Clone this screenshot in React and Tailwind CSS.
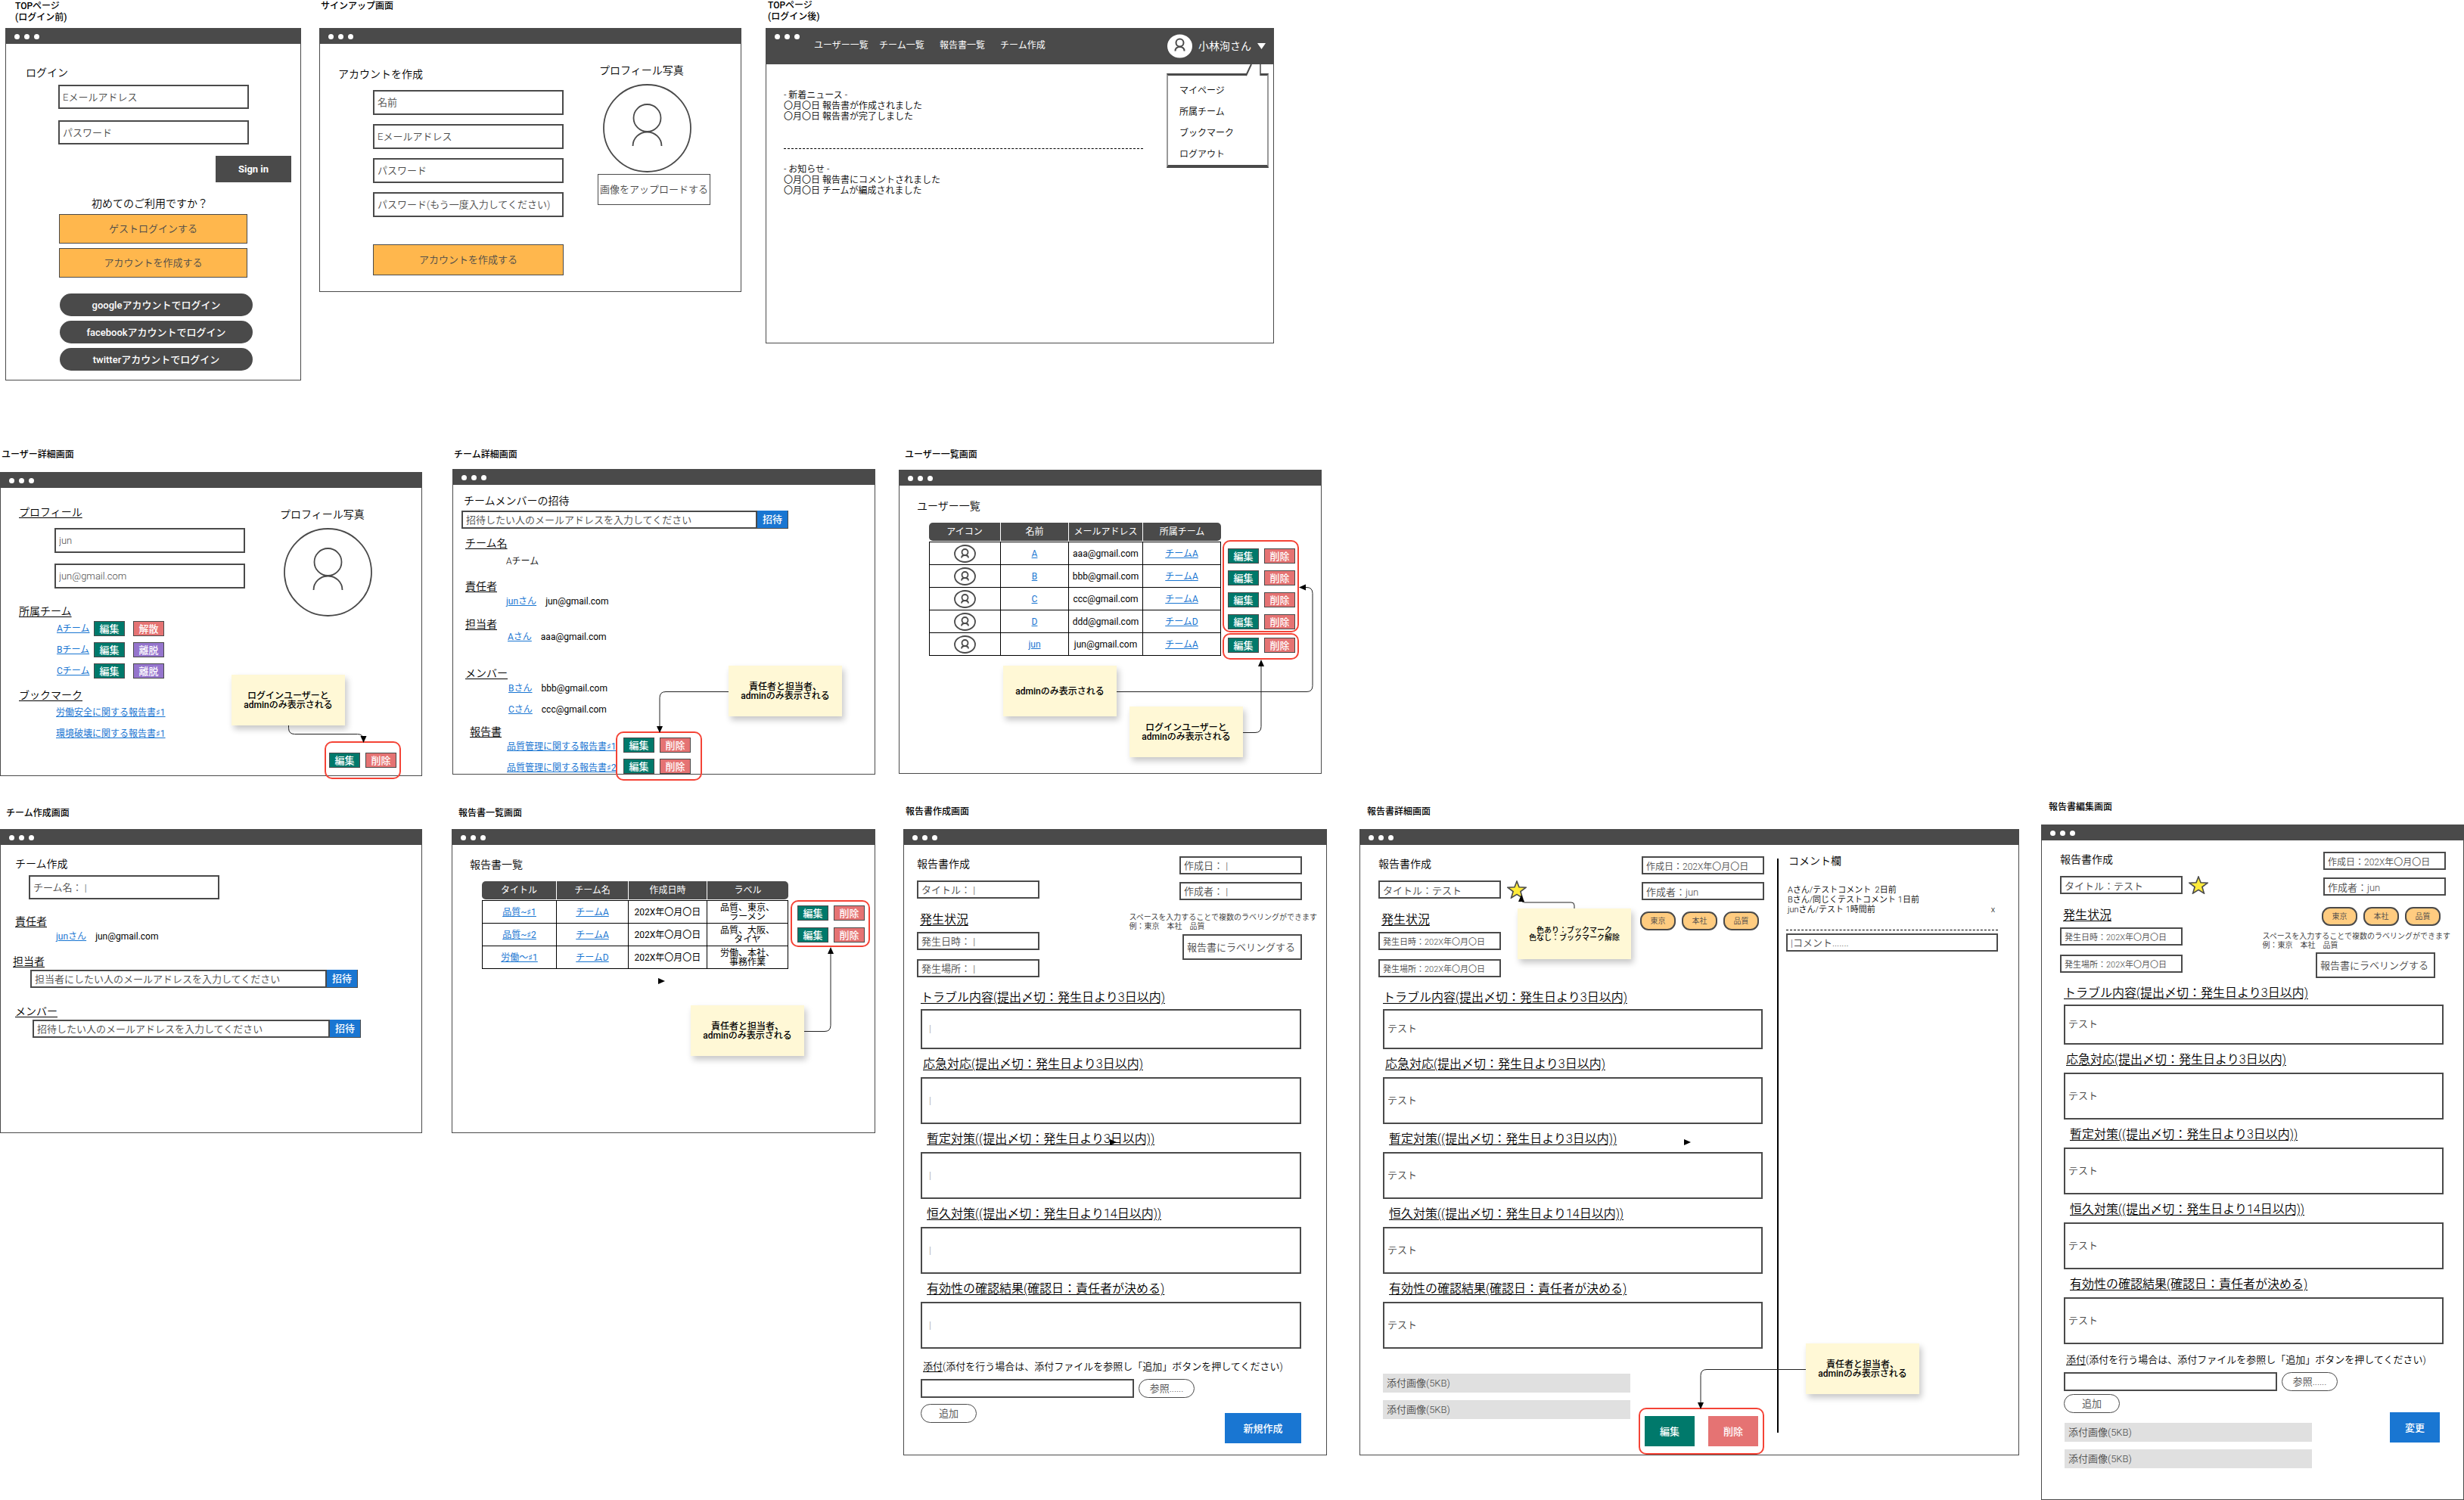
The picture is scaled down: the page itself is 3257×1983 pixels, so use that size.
import React from "react";

/* ---------- shared pieces ---------- */

function Screen({ caption, captionClass = "", className = "", boxClass = "", tall = false, nav, children }) {
  return (
    <section className={className}>
      <h2 className={`text-[12px] font-medium text-black ${captionClass}`}>{caption}</h2>
      <div className={`relative flex flex-col border border-[#4a4a4a] bg-white ${boxClass}`}>
        <header className={`flex bg-[#4a4a4a] ${tall ? "h-[47px] pt-[7px]" : "h-5 items-center"}`}>
          <div className="flex gap-[6px] pl-[11px]">
            <span className="size-[7px] rounded-full bg-white" />
            <span className="size-[7px] rounded-full bg-white" />
            <span className="size-[7px] rounded-full bg-white" />
          </div>
          {nav}
        </header>
        {children}
      </div>
    </section>
  );
}

function Field({ label, className = "", size = "text-[13px]", ...rest }) {
  return (
    <input
      aria-label={label}
      className={`block min-w-0 rounded-none border-2 border-[#4a4a4a] bg-white px-1 text-[#4a4a4a] placeholder:text-[#4a4a4a] ${size} ${className}`}
      {...rest}
    />
  );
}

function Tile({ tone, children }) {
  const tones = {
    green: "bg-[#00796b]",
    red: "bg-[#e57373]",
    purple: "bg-[#9575cd]",
  };
  return (
    <button
      className={`flex h-5 w-[41px] items-center justify-center border border-[#4a4a4a] text-[13px] leading-none font-medium text-white ${tones[tone]}`}
    >
      {children}
    </button>
  );
}

function EditDelete() {
  return (
    <div className="flex gap-[7px]">
      <Tile tone="green">編集</Tile>
      <Tile tone="red">削除</Tile>
    </div>
  );
}

function Frame({ className = "", children }) {
  return <div className={`relative flex flex-col rounded-[10px] border-2 border-[#f44336] ${className}`}>{children}</div>;
}

function Note({ className = "", size = "text-[12px] leading-[12px]", children }) {
  return (
    <aside
      className={`absolute flex h-[67px] w-[150px] flex-col items-center justify-center bg-[#fff8d6] text-center font-medium whitespace-nowrap text-black shadow-[3px_5px_8px_rgba(0,0,0,0.22)] ${size} ${className}`}
    >
      {children}
    </aside>
  );
}

function Connectors({ lines = [], heads = [] }) {
  return (
    <svg className="pointer-events-none absolute top-0 left-0 size-px overflow-visible" aria-hidden="true">
      {lines.map((d) => (
        <path key={d} d={d} fill="none" stroke="#222" strokeWidth="1" />
      ))}
      {heads.map((d) => (
        <path key={d} d={d} fill="#000" />
      ))}
    </svg>
  );
}

function A({ children, className = "" }) {
  return (
    <a href="#" className={`font-normal whitespace-nowrap text-[#1976d2] underline ${className}`}>
      {children}
    </a>
  );
}

function Portrait({ className = "" }) {
  return (
    <svg viewBox="0 0 117 117" className={`size-[117px] ${className}`} fill="none" stroke="#4a4a4a" strokeWidth="1.8">
      <circle cx="58.5" cy="58.5" r="57.5" />
      <circle cx="58.5" cy="45" r="18" />
      <path d="M39.5 82a19 18.500 0 0 1 38 0" />
    </svg>
  );
}

function MiniAvatar() {
  return (
    <svg viewBox="0 0 29 24" className="mx-auto block h-6 w-[29px]" fill="none" stroke="#4a4a4a" strokeWidth="1.8">
      <ellipse cx="14.500" cy="12" rx="13.500" ry="11" />
      <circle cx="14.500" cy="10" r="4" />
      <path d="M10 17.500q0-3.500 4.500-3.500t4.500 3.500" />
    </svg>
  );
}

function Star() {
  return (
    <svg viewBox="0 0 26 24" className="h-6 w-[26px] shrink-0" fill="#ffeb3b" stroke="#4a4a4a" strokeWidth="1.6">
      <path d="M13 1l3 7.800 8.800.5-6.900 5.300 2.500 8.400L13 18.400 5.600 23l2.500-8.400L1.200 9.300l8.800-.5z" />
    </svg>
  );
}

function SectionTitle({ className = "", children }) {
  return <h3 className={`text-[14px] leading-[18px] text-black underline underline-offset-2 ${className}`}>{children}</h3>;
}

function Invite({ text, label, className = "" }) {
  return (
    <div className={`flex ${className}`}>
      <Field label={label} placeholder={text} className="h-6 flex-1" />
      <button className="h-6 w-[41px] border-r border-b border-[#4a4a4a] bg-[#1976d2] text-[13px] leading-none font-medium text-white">
        招待
      </button>
    </div>
  );
}

function Person({ name, mail, className = "" }) {
  return (
    <div className={`flex gap-3 text-[12px] leading-4 font-normal text-black ${className}`}>
      <A>{name}</A>
      <span>{mail}</span>
    </div>
  );
}

function Table({ label, cols, heads, rows }) {
  return (
    <table aria-label={label} className="w-full flex-1 table-fixed border-separate border-spacing-0 text-center text-[12px] font-normal text-black">
      <colgroup>
        {cols.map((c, i) => (
          <col key={i} className={c} />
        ))}
      </colgroup>
      <thead>
        <tr>
          {heads.map((h) => (
            <th
              key={h}
              className="h-[25px] border-b border-white bg-[#4a4a4a] bg-clip-padding p-0 leading-none font-normal whitespace-nowrap text-white not-last:border-r first:rounded-l-[5px] last:rounded-r-[5px]"
            >
              {h}
            </th>
          ))}
        </tr>
      </thead>
      <tbody className="[&>tr:first-child>td]:h-[31px] [&>tr:first-child>td]:border-t">
        {rows.map((r, i) => (
          <tr key={i}>
            {r.map((c, j) => (
              <td key={j} className="h-[30px] border-r border-b border-black p-0 leading-[12px] whitespace-nowrap first:border-l">
                {c}
              </td>
            ))}
          </tr>
        ))}
      </tbody>
    </table>
  );
}

/* ---------- report form parts ---------- */

const SECTIONS = [
  ["トラブル内容(提出〆切：発生日より3日以内)", "", "h-[53px]"],
  ["応急対応(提出〆切：発生日より3日以内)", "pl-[3px]", "h-[62px]"],
  ["暫定対策((提出〆切：発生日より3日以内))", "pl-2", "h-[62px]"],
  ["恒久対策((提出〆切：発生日より14日以内))", "pl-2", "h-[62px]"],
  ["有効性の確認結果(確認日：責任者が決める)", "pl-2", "h-[62px]"],
];

function Sections({ value, className = "" }) {
  return (
    <div className={`flex flex-col gap-2 ${className}`}>
      {SECTIONS.map(([title, indent, height], i) => (
        <label key={title} className={`flex flex-col ${i ? "gap-[5px]" : "gap-[3px]"}`}>
          <span className={`text-[16px] leading-6 whitespace-nowrap text-black underline underline-offset-2 ${indent}`}>{title}</span>
          {value ? (
            <textarea
              defaultValue={value}
              className={`block w-full resize-none border-2 border-[#4a4a4a] px-1 text-[13px] leading-5 text-[#4a4a4a] ${height} ${i ? "pt-[19px]" : "pt-[14px]"}`}
            />
          ) : (
            <textarea
              placeholder="|"
              className={`block w-full resize-none border-2 border-[#4a4a4a] px-[9px] text-[13px] leading-5 placeholder:text-[#999] ${height} ${i ? "pt-[19px]" : "pt-[14px]"}`}
            />
          )}
        </label>
      ))}
    </div>
  );
}

function Basics({ filled, className = "" }) {
  return (
    <div className={`flex flex-col pt-[15px] ${className}`}>
      <h3 className="text-[14px] leading-5 text-black">報告書作成</h3>
      <div className="mt-3 flex h-6 items-center gap-2">
        {filled ? (
          <Field label="タイトル" defaultValue="タイトル：テスト" className="h-6 w-[162px]" />
        ) : (
          <Field label="タイトル" placeholder="タイトル： |" className="h-6 w-[162px]" />
        )}
        {filled && <Star />}
      </div>
      <h3 className="mt-4 pl-1 text-[16px] leading-6 text-black underline underline-offset-2">発生状況</h3>
      {filled ? (
        <>
          <Field label="発生日時" size="text-[11px]" defaultValue="発生日時：202X年〇月〇日" className="mt-1 h-6 w-[162px]" />
          <Field label="発生場所" size="text-[11px]" defaultValue="発生場所：202X年〇月〇日" className="mt-3 h-6 w-[162px]" />
        </>
      ) : (
        <>
          <Field label="発生日時" placeholder="発生日時： |" className="mt-1 h-6 w-[162px]" />
          <Field label="発生場所" placeholder="発生場所： |" className="mt-3 h-6 w-[162px]" />
        </>
      )}
    </div>
  );
}

function Authoring({ filled, className = "" }) {
  return (
    <div className={`flex flex-col gap-2.5 pt-[15px] ${className}`}>
      {filled ? (
        <>
          <Field label="作成日" size="text-[12px]" defaultValue="作成日：202X年〇月〇日" className="h-6 w-[162px]" />
          <Field label="作成者" defaultValue="作成者：jun" className="h-6 w-[162px]" />
        </>
      ) : (
        <>
          <Field label="作成日" placeholder="作成日： |" className="h-6 w-[162px]" />
          <Field label="作成者" placeholder="作成者： |" className="h-6 w-[162px]" />
        </>
      )}
    </div>
  );
}

function Tags({ className = "" }) {
  return (
    <div className={`flex gap-2 ${className}`}>
      {["東京", "本社", "品質"].map((t) => (
        <span
          key={t}
          className="flex h-[25px] w-[47px] items-center justify-center rounded-[11px] border-2 border-[#4a4a4a] bg-[#ffcc80] text-[10px] leading-none text-[#4a4a4a]"
        >
          {t}
        </span>
      ))}
    </div>
  );
}

function LabelHint({ className = "" }) {
  return (
    <p className={`text-[10px] leading-[12px] whitespace-nowrap text-[#333] ${className}`}>
      スペースを入力することで複数のラベリングができます
      <br />
      例：東京　本社　品質
    </p>
  );
}

function Upload({ className = "", gap = "" }) {
  return (
    <div className={className}>
      <p className="pl-[3px] text-[13px] leading-5 whitespace-nowrap text-black">
        <span className="underline underline-offset-2">添付</span>
        (添付を行う場合は、添付ファイルを参照し「追加」ボタンを押してください)
      </p>
      <div className="mt-[6px] flex gap-[6px]">
        <Field label="添付ファイル" className="h-[25px] w-[282px]" />
        <button className="h-[25px] w-[74px] rounded-full border border-[#4a4a4a] text-[13px] leading-none text-[#4a4a4a]">参照......</button>
      </div>
      <button className={`h-[25px] w-[74px] rounded-full border border-[#4a4a4a] text-[13px] leading-none text-[#4a4a4a] ${gap}`}>追加</button>
    </div>
  );
}

function Attachments({ className = "" }) {
  return (
    <ul className={`flex w-[327px] flex-col gap-2.5 ${className}`}>
      <li className="h-[25px] bg-[#e0e0e0] pl-[5px] text-[13px] leading-[25px] text-[#4a4a4a]">添付画像(5KB)</li>
      <li className="h-[25px] bg-[#e0e0e0] pl-[5px] text-[13px] leading-[25px] text-[#4a4a4a]">添付画像(5KB)</li>
    </ul>
  );
}

/* ---------- screens ---------- */

function Login() {
  const pill = "h-[30px] rounded-[15px] bg-[#4a4a4a] text-[13px] leading-none font-medium text-white";
  return (
    <Screen
      caption={<>TOPページ<br />(ログイン前)</>}
      captionClass="h-[37px] pt-px pl-[13px] leading-[15px]"
      boxClass="min-h-[466px] pb-3"
    >
      <h3 className="pt-7 pl-[26px] text-[14px] leading-5 text-black">ログイン</h3>
      <div className="mr-[68px] ml-[69px] mt-[6px] flex flex-col gap-[15px]">
        <Field label="Eメールアドレス" placeholder="Eメールアドレス" className="h-8" />
        <Field label="パスワード" placeholder="パスワード" className="h-8" />
      </div>
      <button className="mt-[15px] mr-3 h-[35px] w-[100px] self-end bg-[#4a4a4a] text-[13px] leading-none font-bold text-white">
        Sign in
      </button>
      <p className="mt-[18px] mb-px pr-[9px] text-center text-[14px] leading-5 text-black">初めてのご利用ですか？</p>
      <div className="mx-[70px] mt-[3px] flex flex-col gap-[6px] text-[13px] text-[#4a4a4a]">
        <button className="h-[39px] border border-[#4a4a4a] bg-[#ffb74d] leading-none">ゲストログインする</button>
        <button className="h-[39px] border border-[#4a4a4a] bg-[#ffb74d] leading-none">アカウントを作成する</button>
      </div>
      <div className="mt-[21px] mr-[63px] ml-[71px] flex flex-col gap-[6px]">
        <button className={pill}>googleアカウントでログイン</button>
        <button className={pill}>facebookアカウントでログイン</button>
        <button className={pill}>twitterアカウントでログイン</button>
      </div>
    </Screen>
  );
}

function SignUp() {
  return (
    <Screen
      caption="サインアップ画面"
      captionClass="h-[37px] pt-px pl-0.5 leading-[15px]"
      className="ml-6"
      boxClass="min-h-[349px] pb-5"
    >
      <div className="flex gap-[45px] pr-10">
        <div className="flex-1 pt-[30px]">
          <h3 className="pl-6 text-[14px] leading-5 text-black">アカウントを作成</h3>
          <div className="mt-[11px] ml-[70px] flex flex-col gap-3">
            <Field label="名前" placeholder="名前" className="h-[33px]" />
            <Field label="Eメールアドレス" placeholder="Eメールアドレス" className="h-[33px]" />
            <Field label="パスワード" placeholder="パスワード" className="h-[33px]" />
            <Field label="パスワード(確認)" placeholder="パスワード(もう一度入力してください)" className="h-[33px]" />
            <button className="mt-6 h-[41px] border border-[#4a4a4a] bg-[#ffb74d] text-[13px] leading-none text-[#4a4a4a]">
              アカウントを作成する
            </button>
          </div>
        </div>
        <div className="flex w-[149px] flex-col pt-[25px]">
          <p className="pl-0.5 text-[14px] leading-5 text-black">プロフィール写真</p>
          <Portrait className="mt-2 ml-[7px]" />
          <button className="mt-0.5 h-[41px] border border-[#4a4a4a] bg-white text-[13px] leading-none whitespace-nowrap text-[#4a4a4a]">
            画像をアップロードする
          </button>
        </div>
      </div>
    </Screen>
  );
}

function Home() {
  return (
    <Screen
      caption={<>TOPページ<br />(ログイン後)</>}
      captionClass="h-[37px] pl-[3px] leading-[15px]"
      className="ml-8"
      boxClass="min-h-[417px]"
      tall
      nav={
        <div className="flex flex-1 items-start justify-between pr-[10px] pl-[19px] text-[12px] font-normal text-white">
          <nav className="flex pt-[7px] leading-4">
            <a href="#" className="w-[86px]">ユーザー一覧</a>
            <a href="#" className="w-20">チーム一覧</a>
            <a href="#" className="w-20">報告書一覧</a>
            <a href="#">チーム作成</a>
          </nav>
          <button className="flex items-center text-[14px] leading-none">
            <svg viewBox="0 0 33 32" className="h-8 w-[33px]">
              <ellipse cx="16.500" cy="16" rx="16.500" ry="15.500" fill="#fff" />
              <g fill="none" stroke="#4a4a4a" strokeWidth="2">
                <circle cx="16.500" cy="11.500" r="5" />
                <path d="M10.500 22.500q0-5.500 6-5.500t6 5.500" />
              </g>
            </svg>
            <span className="ml-2">小林洵さん</span>
            <svg viewBox="0 0 11 8" className="ml-2 h-2 w-[11px]" fill="#fff">
              <path d="M0 0h11L5.500 8z" />
            </svg>
          </button>
        </div>
      }
    >
      <div className="w-[498px] pt-[34px] pl-[23px] text-[12px] leading-[14px] text-black">
        <p>- 新着ニュース -</p>
        <p>〇月〇日 報告書が作成されました</p>
        <p>〇月〇日 報告書が完了しました</p>
        <hr className="mt-[35px] border-t border-dashed border-black" />
        <p className="mt-5">- お知らせ -</p>
        <p>〇月〇日 報告書にコメントされました</p>
        <p>〇月〇日 チームが編成されました</p>
      </div>
      <nav className="absolute top-[59px] right-[6px] flex w-[135px] flex-col border-x-2 border-t-[3px] border-b-4 border-x-[#9a9a9a] border-t-[#4a4a4a] border-b-[#4a4a4a] bg-white pt-[6px] pl-[15px] text-[12px] leading-7 text-black">
        <svg className="absolute -top-[15px] -left-0.5 h-[15px] w-[135px] overflow-visible" fill="none" stroke="#4a4a4a">
          <path d="M105 16L112 0H124V16z" fill="#fff" stroke="none" />
          <path d="M105 15L112 0" strokeWidth="2" />
          <path d="M124 0V15" strokeWidth="1.500" />
        </svg>
        <a href="#">マイページ</a>
        <a href="#">所属チーム</a>
        <a href="#">ブックマーク</a>
        <a href="#">ログアウト</a>
      </nav>
    </Screen>
  );
}

function UserDetail() {
  const teams = [
    ["Aチーム", "red", "解散"],
    ["Bチーム", "purple", "離脱"],
    ["Cチーム", "purple", "離脱"],
  ];
  return (
    <Screen caption="ユーザー詳細画面" captionClass="mb-3.5 pl-0.5 leading-[18px]" boxClass="min-h-[402px]">
      <div className="flex">
        <div className="flex-1 pt-[23px]">
          <SectionTitle className="pl-6">プロフィール</SectionTitle>
          <div className="mt-3 mr-[46px] ml-[71px] flex flex-col gap-3.5">
            <Field label="名前" defaultValue="jun" className="h-[33px]" />
            <Field label="メールアドレス" defaultValue="jun@gmail.com" className="h-[33px]" />
          </div>
          <SectionTitle className="mt-[21px] pl-6">所属チーム</SectionTitle>
          <div className="mt-1 ml-[74px] flex flex-col gap-2">
            {teams.map(([name, tone, action]) => (
              <div key={name} className="flex items-center">
                <A className="w-[49px] text-[12px] leading-5">{name}</A>
                <Tile tone="green">編集</Tile>
                <span className="w-[11px]" />
                <Tile tone={tone}>{action}</Tile>
              </div>
            ))}
          </div>
          <SectionTitle className="mt-[13px] pl-6">ブックマーク</SectionTitle>
          <div className="ml-[73px] flex flex-col items-start text-[12px] leading-7">
            <A>労働安全に関する報告書♯1</A>
            <A>環境破壊に関する報告書♯1</A>
          </div>
        </div>
        <div className="flex w-[187px] flex-col pt-[25px]">
          <p className="text-[14px] leading-5 text-black">プロフィール写真</p>
          <Portrait className="mt-2 ml-[5px]" />
          <Frame className="mt-[165px] -mb-[6px] ml-[59px] w-[101px] pt-[13px] pb-[13px] pl-1">
            <EditDelete />
          </Frame>
        </div>
      </div>
      <Note className="top-[267px] left-[305px]">
        <span>ログインユーザーと</span>
        <span>adminのみ表示される</span>
      </Note>
      <Connectors lines={["M380.5 334v3.500q0 8 8 8h83q8 0 8 8"]} heads={["M475.500 348h8l-4 9z"]} />
    </Screen>
  );
}

function TeamDetail() {
  return (
    <Screen caption="チーム詳細画面" captionClass="mb-2.5 pl-0.5 leading-[18px]" className="ml-10" boxClass="min-h-[403px]">
      <h3 className="pt-[11px] pl-3.5 text-[14px] leading-5 text-black">チームメンバーの招待</h3>
      <Invite label="メールアドレス" text="招待したい人のメールアドレスを入力してください" className="mt-[3px] mr-[114px] ml-[11px]" />
      <SectionTitle className="mt-2.5 pl-4">チーム名</SectionTitle>
      <p className="mt-[7px] pl-[70px] text-[12px] leading-4 text-black">Aチーム</p>
      <SectionTitle className="mt-4 pl-4">責任者</SectionTitle>
      <Person name="junさん" mail="jun@gmail.com" className="mt-[3px] ml-[70px]" />
      <SectionTitle className="mt-[13px] pl-4">担当者</SectionTitle>
      <Person name="Aさん" mail="aaa@gmail.com" className="ml-[72px]" />
      <SectionTitle className="mt-[31px] pl-4">メンバー</SectionTitle>
      <div className="mt-[3px] ml-[73px] flex flex-col gap-3">
        <Person name="Bさん" mail="bbb@gmail.com" />
        <Person name="Cさん" mail="ccc@gmail.com" />
      </div>
      <div className="mt-3 -mb-[9px] flex items-start">
        <div className="w-[215px]">
          <SectionTitle className="pl-[22px]">報告書</SectionTitle>
          <div className="mt-[3px] ml-[71px] flex flex-col gap-3 text-[12px] leading-4">
            <A>品質管理に関する報告書♯1</A>
            <A>品質管理に関する報告書♯2</A>
          </div>
        </div>
        <Frame className="mt-[9px] w-[114px] gap-2 pt-[6px] pb-[7px] pl-2">
          <EditDelete />
          <EditDelete />
        </Frame>
      </div>
      <Note className="top-[259px] left-[364px]">
        <span>責任者と担当者、</span>
        <span>adminのみ表示される</span>
      </Note>
      <Connectors lines={["M364 293.500H281q-8 0-8 8V340"]} heads={["M269 339h8l-4 9z"]} />
    </Screen>
  );
}

function UserList() {
  const users = [
    ["A", "aaa@gmail.com", "チームA"],
    ["B", "bbb@gmail.com", "チームA"],
    ["C", "ccc@gmail.com", "チームA"],
    ["D", "ddd@gmail.com", "チームD"],
    ["jun", "jun@gmail.com", "チームA"],
  ];
  return (
    <Screen caption="ユーザー一覧画面" captionClass="mb-[11px] pl-2 leading-[18px]" className="ml-[31px]" boxClass="min-h-[402px]">
      <h3 className="pt-[17px] pl-[23px] text-[14px] leading-5 text-black">ユーザー一覧</h3>
      <div className="mt-3 mr-[29px] ml-[39px] flex items-start gap-0.5">
        <Table
          label="ユーザー一覧"
          cols={["w-[95px]", "w-[90px]", "w-[98px]", "w-[103px]"]}
          heads={["アイコン", "名前", "メールアドレス", "所属チーム"]}
          rows={users.map(([n, m, t]) => [<MiniAvatar />, <A>{n}</A>, m, <A>{t}</A>])}
        />
        <div className="mt-[23px] flex w-[101px] shrink-0 flex-col gap-px">
          <Frame className="gap-[9px] pt-[9px] pb-0.5 pl-[5px]">
            <EditDelete />
            <EditDelete />
            <EditDelete />
            <EditDelete />
          </Frame>
          <Frame className="pt-1 pb-[7px] pl-[5px]">
            <EditDelete />
          </Frame>
        </div>
      </div>
      <Note className="top-[258px] left-[137px]">adminのみ表示される</Note>
      <Note className="top-[312px] left-[304px]">
        <span>ログインユーザーと</span>
        <span>adminのみ表示される</span>
      </Note>
      <Connectors
        lines={["M287 292.500H538q8 0 8-8V162.500q0-8-8-8H536", "M454 346.500h16q8 0 8-8V258"]}
        heads={["M528 154.500l9-4v8z", "M474 259h8l-4-9z"]}
      />
    </Screen>
  );
}

function TeamCreate() {
  return (
    <Screen caption="チーム作成画面" captionClass="mt-2 mb-3 pl-2 leading-[18px]" boxClass="min-h-[402px]">
      <h3 className="pt-[15px] pl-[19px] text-[14px] leading-5 text-black">チーム作成</h3>
      <Field label="チーム名" placeholder="チーム名： |" className="mt-[5px] mr-[267px] ml-[37px] h-8" />
      <SectionTitle className="mt-5 pl-[19px]">責任者</SectionTitle>
      <Person name="junさん" mail="jun@gmail.com" className="mt-[3px] ml-[73px]" />
      <SectionTitle className="mt-4 pl-4">担当者</SectionTitle>
      <Invite label="担当者のメールアドレス" text="担当者にしたい人のメールアドレスを入力してください" className="mt-0.5 mr-[84px] ml-[39px]" />
      <SectionTitle className="mt-[22px] pl-[19px]">メンバー</SectionTitle>
      <Invite label="メンバーのメールアドレス" text="招待したい人のメールアドレスを入力してください" className="mt-0.5 mr-20 ml-[42px]" />
    </Screen>
  );
}

function ReportList() {
  const date = "202X年〇月〇日";
  const rows = [
    [<A>品質~♯1</A>, <A>チームA</A>, date, <>品質、東京、<br />ラーメン</>],
    [<A>品質~♯2</A>, <A>チームA</A>, date, <>品質、大阪、<br />タイヤ</>],
    [<A>労働～♯1</A>, <A>チームD</A>, date, <>労働、本社、<br />事務作業</>],
  ];
  return (
    <Screen caption="報告書一覧画面" captionClass="mt-2 mb-3 pl-[9px] leading-[18px]" className="ml-[39px]" boxClass="min-h-[402px]">
      <h3 className="pt-4 pl-[23px] text-[14px] leading-5 text-black">報告書一覧</h3>
      <div className="mt-3 mr-[6px] ml-[39px] flex items-start gap-[3px]">
        <Table
          label="報告書一覧"
          cols={["w-[99px]", "w-[95px]", "w-[104px]", "w-[107px]"]}
          heads={["タイトル", "チーム名", "作成日時", "ラベル"]}
          rows={rows}
        />
        <Frame className="mt-[25px] w-[105px] shrink-0 gap-[9px] pt-[5px] pb-1 pl-[7px]">
          <EditDelete />
          <EditDelete />
        </Frame>
      </div>
      <Note className="top-[232px] left-[315px]">
        <span>責任者と担当者、</span>
        <span>adminのみ表示される</span>
      </Note>
      <Connectors lines={["M465 266.500h27q8 0 8-8V163"]} heads={["M496 164h8l-4-9z", "M272 196v8l9-4z"]} />
    </Screen>
  );
}

function ReportCreate() {
  return (
    <Screen caption="報告書作成画面" captionClass="mt-1.5 mb-3.5 pl-[3px] leading-[18px]" className="ml-[37px]" boxClass="min-h-[828px]">
      <div className="flex min-h-[190px] justify-between">
        <Basics className="pl-[17px]" />
        <div className="flex flex-col items-end">
          <Authoring className="mr-8" />
          <LabelHint className="mt-[17px] mr-3" />
          <Field label="ラベル" placeholder="報告書にラベリングする" className="mt-1 mr-8 h-[34px] w-[158px]" />
        </div>
      </div>
      <Sections className="mr-[33px] ml-[22px]" />
      <div className="mt-[14px] mr-[33px] ml-[22px] flex flex-col">
        <Upload gap="mt-2" />
        <button className="-mt-[13px] h-10 w-[101px] self-end bg-[#1976d2] text-[13px] leading-none font-medium text-white">新規作成</button>
      </div>
      <Connectors heads={["M272 409v8l9-4z"]} />
    </Screen>
  );
}

function ReportDetail() {
  return (
    <Screen caption="報告書詳細画面" captionClass="mt-1.5 mb-3.5 pl-[10px] leading-[18px]" className="ml-[43px]" boxClass="min-h-[828px]">
      <div className="grid flex-1 grid-cols-[551fr_2px_317fr]">
        <div>
          <div className="flex min-h-[190px] justify-between">
            <Basics filled className="pl-6" />
            <div className="flex flex-col items-end">
              <Authoring filled className="mr-[17px]" />
              <Tags className="mt-[15px] mr-6" />
            </div>
          </div>
          <Sections value="テスト" className="mr-[19px] ml-[30px]" />
          <div className="mt-[33px] mr-[17px] -mb-px ml-[30px] flex items-start justify-between">
            <Attachments />
            <Frame className="mt-[45px] w-[166px] pt-[9px] pb-[9px] pl-[6px]">
              <div className="flex gap-[18px] text-[13px] leading-none font-medium text-white">
                <button className="h-10 w-[66px] bg-[#00796b]">編集</button>
                <button className="h-10 w-[66px] bg-[#e57373]">削除</button>
              </div>
            </Frame>
          </div>
        </div>
        <div className="mt-[18px] mb-[29px] bg-black" />
        <div className="pt-[11px] pr-[27px] pl-[10px] text-black">
          <h3 className="pl-[3px] text-[14px] leading-5">コメント欄</h3>
          <ul className="mt-[22px] pl-0.5 text-[11px] leading-[13px]">
            <li>Aさん/テストコメント&nbsp; 2日前</li>
            <li>Bさん/同じくテストコメント 1日前</li>
            <li className="flex justify-between pr-1">
              junさん/テスト 1時間前
              <button className="leading-[13px]" aria-label="コメントを削除">x</button>
            </li>
          </ul>
          <hr className="mt-5 border-t border-dashed border-black" />
          <Field label="コメント" placeholder="|コメント......." className="mt-1 h-6 w-full" />
        </div>
      </div>
      <Connectors
        lines={["M283 104v-4q0-4-4-4h-62q-4 0-4-4", "M589 713.500H458q-8 0-8 8V758"]}
        heads={["M209 95h8l-4-9z", "M446 757h8l-4 9z", "M428 409v8l9-4z"]}
      />
      <Note className="top-[104px] left-[208px]" size="text-[10px] leading-[10px]">
        <span>色あり：ブックマーク</span>
        <span>色なし：ブックマーク解除</span>
      </Note>
      <Note className="top-[679px] left-[589px]">
        <span>責任者と担当者、</span>
        <span>adminのみ表示される</span>
      </Note>
    </Screen>
  );
}

function ReportEdit() {
  return (
    <Screen caption="報告書編集画面" captionClass="mb-3.5 pl-[10px] leading-[18px]" className="ml-[29px]" boxClass="min-h-[893px]">
      <div className="flex min-h-[190px] justify-between">
        <Basics filled className="pl-6" />
        <div className="flex flex-col items-end">
          <Authoring filled className="mr-[23px]" />
          <Tags className="mt-[15px] mr-[30px]" />
          <LabelHint className="mt-2 mr-[17px]" />
          <Field label="ラベル" placeholder="報告書にラベリングする" className="mt-[3px] mr-[37px] h-[34px] w-[158px]" />
        </div>
      </div>
      <Sections value="テスト" className="mr-[26px] ml-[29px]" />
      <Upload gap="mt-1" className="mt-[11px] ml-[29px]" />
      <div className="mr-[31px] ml-[30px] -mt-px flex items-start justify-between">
        <Attachments className="mt-[14px]" />
        <button className="h-10 w-[66px] bg-[#1976d2] text-[13px] leading-none font-medium text-white">変更</button>
      </div>
    </Screen>
  );
}

export default function App() {
  return (
    <main className="overflow-hidden bg-white font-[Roboto,'DejaVu_Sans','Noto_Sans_CJK_JP',sans-serif] font-[350]">
      <div className="grid grid-cols-[391fr_582fr_704fr_1573fr] items-start pl-[7px]">
        <Login />
        <SignUp />
        <Home />
      </div>
      <div className="mt-[89px] grid grid-cols-[558fr_599fr_590fr_1510fr] items-start">
        <UserDetail />
        <TeamDetail />
        <UserList />
      </div>
      <div className="mt-8 grid grid-cols-[558fr_599fr_597fr_915fr_588fr] items-start">
        <TeamCreate />
        <ReportList />
        <ReportCreate />
        <ReportDetail />
        <ReportEdit />
      </div>
    </main>
  );
}
